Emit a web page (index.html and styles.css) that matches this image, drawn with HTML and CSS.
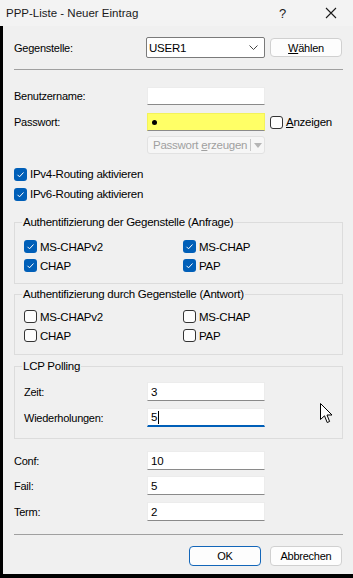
FILE: index.html
```html
<!DOCTYPE html>
<html lang="de">
    <head>
        <meta charset="UTF-8">
        <title>PPP-Liste - Neuer Eintrag</title>
        <link rel="stylesheet" href="styles.css">
    </head>
    <body>
        <div class="title-bar">
            <span class="title-text">PPP-Liste - Neuer Eintrag</span>
            <span class="title-help">?</span>
            <svg class="title-close" width="12" height="12" viewBox="0 0 12 12">
                <path d="M1 1 L11 11 M11 1 L1 11" stroke="#1a1a1a" stroke-width="1.1" fill="none"/>
            </svg>
        </div>
        <div class="window">
            <div class="row row-top">
                <span class="label">Gegenstelle:</span>
                <div class="combo">
                    <span>USER1</span>
                    <svg width="9" height="6" viewBox="0 0 9 6"><path d="M0.5 0.5 L4.5 4.5 L8.5 0.5" stroke="#444" fill="none"/></svg>
                </div>
                <button class="btn btn-small"><u>W</u>ählen</button>
            </div>
            <div class="separator sep-top"></div>

            <div class="row row-user">
                <span class="label">Benutzername:</span>
                <div class="field"></div>
            </div>
            <div class="row row-pass">
                <span class="label">Passwort:</span>
                <div class="field field-yellow"><span class="dot"></span></div>
                <label class="check check-show"><span class="box"></span><span><u>A</u>nzeigen</span></label>
            </div>
            <div class="row row-gen">
                <span class="label"></span>
                <div class="split-btn">
                    <span class="split-main"><span>Passwort <u>e</u>rzeugen</span></span>
                    <span class="split-arrow"><svg width="8" height="5" viewBox="0 0 8 5"><path d="M0 0 L8 0 L4 5 Z" fill="#b5b5b5"/></svg></span>
                </div>
            </div>

            <label class="check check-line check-first"><span class="box checked"></span>IPv4-Routing aktivieren</label>
            <label class="check check-line"><span class="box checked"></span>IPv6-Routing aktivieren</label>

            <fieldset class="group group-one">
                <legend>Authentifizierung der Gegenstelle (Anfrage)</legend>
                <div class="check-grid">
                    <label class="check"><span class="box checked"></span>MS-CHAPv2</label>
                    <label class="check"><span class="box checked"></span>MS-CHAP</label>
                    <label class="check"><span class="box checked"></span>CHAP</label>
                    <label class="check"><span class="box checked"></span>PAP</label>
                </div>
            </fieldset>

            <fieldset class="group group-two">
                <legend>Authentifizierung durch Gegenstelle (Antwort)</legend>
                <div class="check-grid">
                    <label class="check"><span class="box"></span>MS-CHAPv2</label>
                    <label class="check"><span class="box"></span>MS-CHAP</label>
                    <label class="check"><span class="box"></span>CHAP</label>
                    <label class="check"><span class="box"></span>PAP</label>
                </div>
            </fieldset>

            <fieldset class="group group-lcp">
                <legend>LCP Polling</legend>
                <div class="row row-num row-zeit">
                    <span class="label label-inner">Zeit:</span>
                    <div class="field">3</div>
                </div>
                <div class="row row-num row-wied">
                    <span class="label label-inner">Wiederholungen:</span>
                    <div class="field field-focus">5<span class="caret"></span></div>
                </div>
            </fieldset>

            <div class="row row-num row-conf">
                <span class="label">Conf:</span>
                <div class="field">10</div>
            </div>
            <div class="row row-num row-fail">
                <span class="label">Fail:</span>
                <div class="field">5</div>
            </div>
            <div class="row row-num row-term">
                <span class="label">Term:</span>
                <div class="field">2</div>
            </div>

            <div class="separator sep-bottom"></div>
            <div class="buttons">
                <button class="btn btn-ok">OK</button>
                <button class="btn">Abbrechen</button>
            </div>

            <svg class="mouse" width="13" height="21" viewBox="0 0 13 21">
                <path d="M0.5 0.5 L0.5 16.5 L4.5 12.8 L7.2 19.5 L9.6 18.5 L7 12 L12 12 Z" fill="#fff" stroke="#000" stroke-width="1" stroke-linejoin="round"/>
            </svg>
        </div>
    </body>
</html>
```

FILE: styles.css
```css
* {
    padding: 0;
    margin: 0;
    box-sizing: border-box;
}
body {
    width: 353px;
    height: 578px;
    background-color: #f0f0f0;
    font-family: "Liberation Sans", Arial, sans-serif;
    font-size: 11px;
    letter-spacing: -0.25px;
    color: #000;
    overflow: hidden;
}
.title-bar {
    height: 26px;
    background: #f3f3f3;
    display: flex;
    align-items: center;
    padding-left: 6px;
    font-size: 11.5px;
    letter-spacing: 0;
    color: #1a1a1a;
}
.title-text {
    flex: 1;
}
.title-help {
    font-size: 13px;
    width: 46px;
}
.title-close {
    margin-right: 16px;
}
.window {
    position: relative;
    height: 552px;
    border-left: 3px solid #000;
    border-bottom: 4px solid #000;
    padding: 0 10px 0 11px;
}
.row {
    display: flex;
    align-items: center;
}
.label {
    width: 133px;
    flex: none;
}
.label-inner {
    width: 123px;
}
.row-top {
    padding-top: 11px;
    height: 32px;
}
.combo {
    width: 119px;
    height: 21px;
    margin-left: -1px;
    background: #fff;
    border: 1px solid #7a7a7a;
    border-radius: 2px;
    display: flex;
    align-items: center;
    justify-content: space-between;
    padding: 0 6px 0 2px;
    font-size: 11.5px;
}
.btn {
    font-family: inherit;
    font-size: 11px;
    letter-spacing: -0.25px;
    color: #000;
    background: #fdfdfd;
    border: 1px solid #d0d0d0;
    border-radius: 4px;
    width: 72px;
    height: 20px;
}
.btn-small {
    margin-left: 5px;
    height: 19px;
}
.btn-ok {
    border-color: #1366b9;
}
.separator {
    height: 1px;
    background: #a0a0a0;
}
.sep-top {
    margin-top: 11px;
}
.field {
    width: 118px;
    height: 18px;
    background: #fff;
    border: 1px solid #ececec;
    border-bottom-color: #8a8a8a;
    padding-left: 3px;
    display: flex;
    align-items: center;
    font-size: 11.5px;
}
.row-user {
    margin-top: 17px;
}
.row-pass {
    margin-top: 8px;
}
.field-yellow {
    background: #ffff66;
    border-color: #f3f35a;
    border-bottom-color: #8a8a8a;
}
.dot {
    width: 5px;
    height: 5px;
    border-radius: 50%;
    background: #000;
    margin-left: 1px;
}
.check {
    display: flex;
    align-items: center;
    gap: 3px;
}
.check-show {
    margin-left: 5px;
    font-size: 11.5px;
}
.box {
    width: 13px;
    height: 13px;
    border: 1px solid #333;
    border-radius: 3px;
    background: #fdfdfd;
    flex: none;
}
.box.checked {
    border: none;
    background: #005fb8 url("data:image/svg+xml;utf8,<svg xmlns='http://www.w3.org/2000/svg' width='13' height='13'><path d='M3.5 6.8 L5.5 8.8 L9.5 4.5' stroke='white' stroke-width='1' fill='none'/></svg>") no-repeat;
}
.row-gen {
    margin-top: 5px;
}
.split-btn {
    width: 118px;
    height: 18px;
    border: 1px solid #e2e2e2;
    border-radius: 3px;
    background: #f6f6f6;
    display: flex;
    color: #a0a0a0;
}
.split-main {
    flex: 1;
    display: flex;
    align-items: center;
    padding-left: 5px;
    font-size: 11.5px;
}
.split-arrow {
    width: 14px;
    border-left: 1px solid #c8c8c8;
    margin: 2px 0;
    display: flex;
    align-items: center;
    justify-content: center;
}
.check-line {
    height: 20px;
    font-size: 11.5px;
}
.check-first {
    margin-top: 10px;
}
.group {
    border: 1px solid #dcdcdc;
    padding: 0 9px;
    min-width: 0;
}
.group legend {
    padding: 0 1px;
    margin-left: -2px;
    line-height: 14px;
    font-size: 11.5px;
}
.check-grid {
    display: grid;
    grid-template-columns: 159px 1fr;
    grid-auto-rows: 19px;
    font-size: 11.5px;
}
.group-one {
    margin-top: 11px;
}
.group-one .check-grid {
    margin-top: 8px;
    margin-bottom: 8px;
}
.group-two {
    margin-top: 3px;
}
.group-two .check-grid {
    margin-top: 6px;
    margin-bottom: 9px;
}
.group-lcp {
    margin-top: 4px;
    padding-bottom: 11px;
}
.row-num .field {
    height: 19px;
}
.row-zeit {
    margin-top: 9px;
}
.row-wied {
    margin-top: 7px;
}
.field-focus {
    border-bottom: 2px solid #005fb8;
}
.caret {
    width: 1px;
    height: 13px;
    background: #000;
    margin-left: 1px;
}
.row-conf {
    margin-top: 12px;
}
.row-fail {
    margin-top: 6px;
}
.row-term {
    margin-top: 7px;
}
.sep-bottom {
    margin-top: 13px;
}
.buttons {
    margin-top: 11px;
    display: flex;
    justify-content: flex-end;
    gap: 9px;
    padding-right: 1px;
}
.mouse {
    position: absolute;
    left: 317px;
    top: 377px;
}
```
